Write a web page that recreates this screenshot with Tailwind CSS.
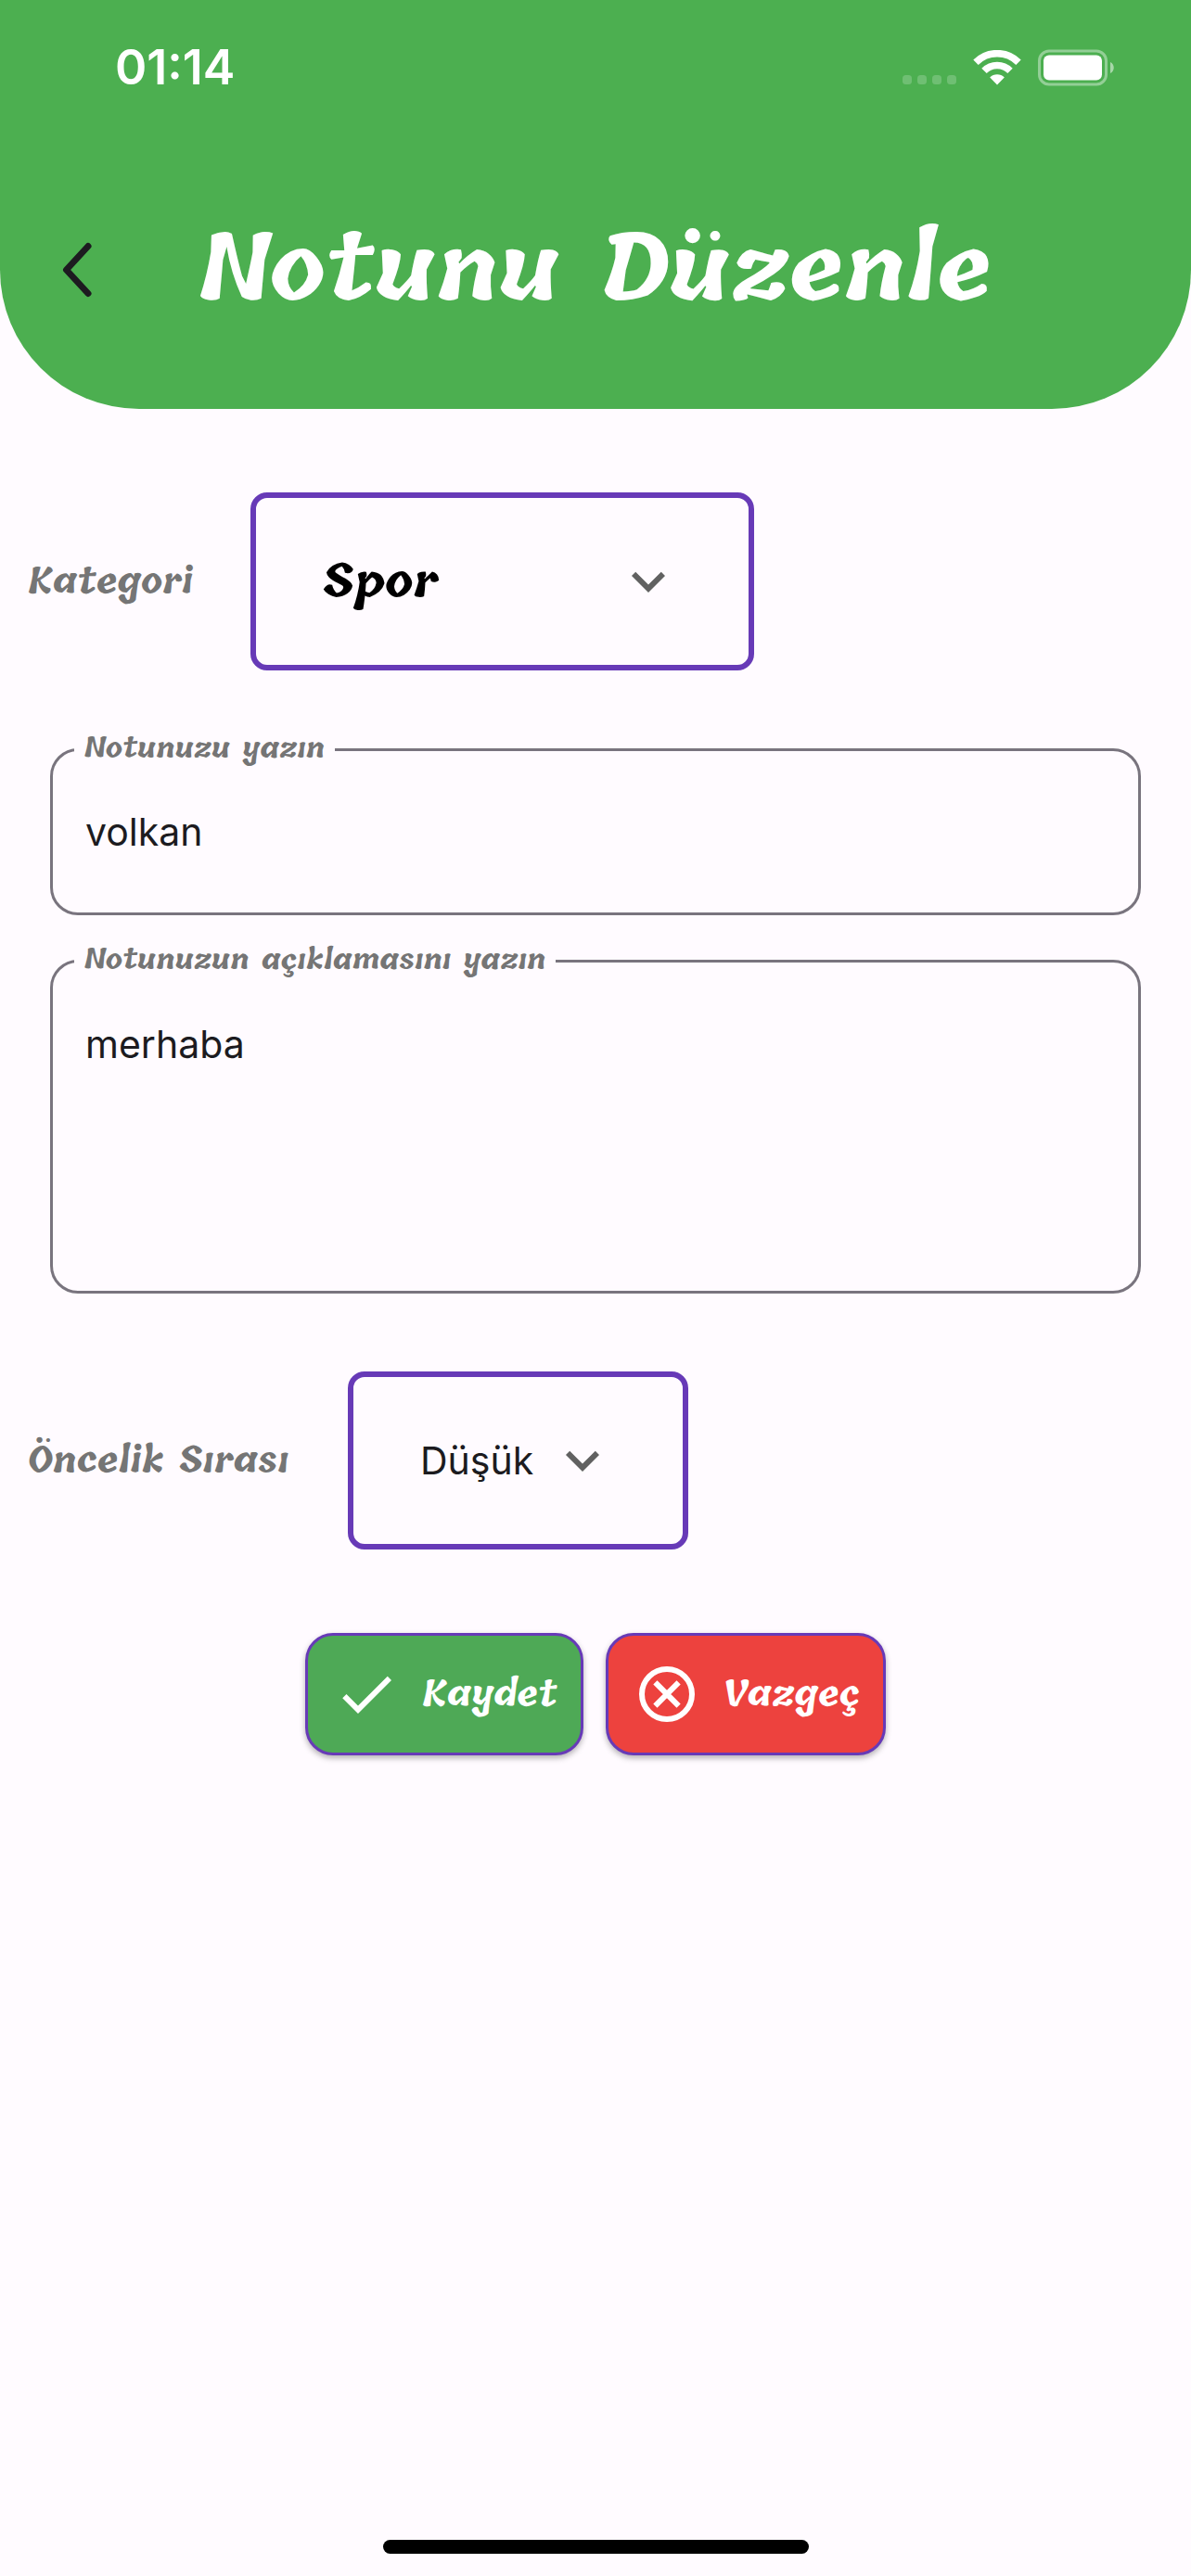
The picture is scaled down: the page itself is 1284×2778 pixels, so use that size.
<!DOCTYPE html>
<html lang="tr">
<head>
<meta charset="utf-8">
<meta name="viewport" content="width=device-width, initial-scale=1">
<title>Notunu Düzenle</title>
<script src="https://cdn.jsdelivr.net/npm/@tailwindcss/browser@4"></script>
</head>
<body class="flex min-h-screen flex-col bg-[#fffbff] font-['Inter',sans-serif] text-[#1c1b1f]">
  <header class="rounded-b-[150px] bg-[#4caf50] pt-[43px] pb-[90px]">
    <div class="flex h-[60px] items-center justify-between pr-[81px] pl-[124px] text-white">
      <time class="text-[52px] leading-[60px] font-semibold">01:14</time>
      <div class="flex items-center gap-[18px]">
        <svg class="h-[38px] w-[58px]" viewBox="0 0 58 38" fill="#fff" fill-opacity=".2" aria-hidden="true">
          <rect x="0" y="27" width="10" height="10" rx="3.5"/><rect x="16" y="27" width="10" height="10" rx="3.5"/><rect x="32" y="27" width="10" height="10" rx="3.5"/><rect x="48" y="27" width="10" height="10" rx="3.5"/>
        </svg>
        <svg class="h-[38px] w-[52px]" viewBox="0 0 52 38" fill="none" stroke="#fff" stroke-width="7.6" aria-hidden="true">
          <path d="M3 13.2a32.5 32.5 0 0 1 46 0"/>
          <path d="M12 22.3a19.7 19.7 0 0 1 28 0"/>
          <path d="M18.2 29.5a11 11 0 0 1 15.600 0L26 37.600Z" fill="#fff" stroke="none"/>
        </svg>
        <svg class="h-[40px] w-[84px]" viewBox="0 0 84 40" fill="none" aria-hidden="true">
          <rect x="1.500" y="2" width="72" height="36" rx="10.500" stroke="#fff" stroke-opacity=".4" stroke-width="3"/>
          <rect x="6" y="6.500" width="63" height="27" rx="6" fill="#fff"/>
          <path d="M78 14c5 2 5 10 0 12Z" fill="#fff" fill-opacity=".5"/>
        </svg>
      </div>
    </div>
    <div class="mt-[128px] grid h-[120px] grid-cols-[120px_1fr_120px] items-center">
      <button type="button" aria-label="Geri" class="flex h-[120px] items-center justify-end pr-[19px]">
        <svg class="h-[60px] w-[36px]" viewBox="0 0 36 60" fill="none" stroke="#1d1b20" stroke-width="7" stroke-linecap="round" stroke-linejoin="round"><path d="M30 4.500 6.500 30 30 55.500"/></svg>
      </button>
      <h1 class="text-center font-['Tillana','Lato',cursive] text-[99px] leading-[120px] font-bold whitespace-nowrap text-white">Notunu Düzenle</h1>
    </div>
  </header>

  <form class="flex flex-col pt-[90px]">
    <div class="flex items-center">
      <label for="kategori" class="w-[270px] shrink-0 pl-[30px] font-['Tillana','Lato',cursive] text-[38px] leading-[48px] font-bold whitespace-nowrap text-[#757575]">Kategori</label>
      <div class="relative">
        <select id="kategori" class="h-[192px] w-[543px] appearance-none rounded-[18px] border-[6px] border-[#673ab7] bg-transparent pl-[72px] font-['Tillana','Lato',cursive] text-[50px] leading-[64px] font-bold text-black"><option>Spor</option></select>
        <svg class="pointer-events-none absolute top-[60px] right-[78px] size-[72px]" viewBox="0 0 24 24" fill="#616161" aria-hidden="true"><path d="M7.410 8.590 12 13.170l4.590-4.580L18 10l-6 6-6-6z"/></svg>
      </div>
    </div>

    <div class="mx-[54px] mt-[84px] flex flex-col gap-[48px]">
      <div class="relative">
        <label for="baslik" class="absolute -top-[18px] left-[26px] bg-[#fffbff] px-[11px] font-['Tillana','Lato',cursive] text-[30px] leading-[36px] font-bold whitespace-nowrap text-[#757575]">Notunuzu yazın</label>
        <input id="baslik" type="text" value="volkan" class="block h-[180px] w-full rounded-[30px] border-[3px] border-[#79747e] bg-transparent px-[35px] text-[41px]">
      </div>
      <div class="relative">
        <label for="aciklama" class="absolute -top-[18px] left-[26px] bg-[#fffbff] px-[11px] font-['Tillana','Lato',cursive] text-[30px] leading-[36px] font-bold whitespace-nowrap text-[#757575]">Notunuzun açıklamasını yazın</label>
        <textarea id="aciklama" class="block h-[360px] w-full resize-none rounded-[30px] border-[3px] border-[#79747e] bg-transparent px-[35px] pt-[58px] text-[41px] leading-[60px]">merhaba</textarea>
      </div>
    </div>

    <div class="mt-[84px] flex items-center">
      <label for="oncelik" class="w-[375px] shrink-0 pl-[30px] font-['Tillana','Lato',cursive] text-[38px] leading-[48px] font-bold whitespace-nowrap text-[#757575]">Öncelik Sırası</label>
      <div class="relative">
        <select id="oncelik" class="h-[192px] w-[367px] appearance-none rounded-[18px] border-[6px] border-[#673ab7] bg-transparent pl-[72px] text-[41px] leading-[60px]"><option>Düşük</option></select>
        <svg class="pointer-events-none absolute top-[60px] right-[78px] size-[72px]" viewBox="0 0 24 24" fill="#616161" aria-hidden="true"><path d="M7.410 8.590 12 13.170l4.590-4.580L18 10l-6 6-6-6z"/></svg>
      </div>
    </div>

    <div class="mt-[90px] flex justify-center gap-[24px] font-['Tillana','Lato',cursive] text-[38px] leading-[48px] font-bold text-white">
      <button type="button" class="flex h-[132px] w-[300px] items-center gap-[24px] rounded-[30px] border-[3px] border-[#673ab7] bg-[#4ea956] pl-[27px] shadow-[0_3px_6px_rgba(0,0,0,0.3)]">
        <svg class="size-[72px]" viewBox="0 0 24 24" fill="#fff" aria-hidden="true"><path d="M9 16.170 4.830 12l-1.420 1.410L9 19 21 7l-1.410-1.410z"/></svg>
        <span>Kaydet</span>
      </button>
      <button type="button" class="flex h-[132px] w-[302px] items-center gap-[24px] rounded-[30px] border-[3px] border-[#673ab7] bg-[#ed423e] pl-[27px] shadow-[0_3px_6px_rgba(0,0,0,0.3)]">
        <svg class="size-[72px]" viewBox="0 0 24 24" fill="none" stroke="#fff" stroke-width="2" aria-hidden="true"><circle cx="12" cy="12" r="9"/><path d="m7.800 7.800 8.400 8.400M16.200 7.800l-8.400 8.400"/></svg>
        <span>Vazgeç</span>
      </button>
    </div>
  </form>

  <div class="mx-auto mt-auto mb-[24px] h-[15px] w-[459px] rounded-full bg-black"></div>
</body>
</html>
